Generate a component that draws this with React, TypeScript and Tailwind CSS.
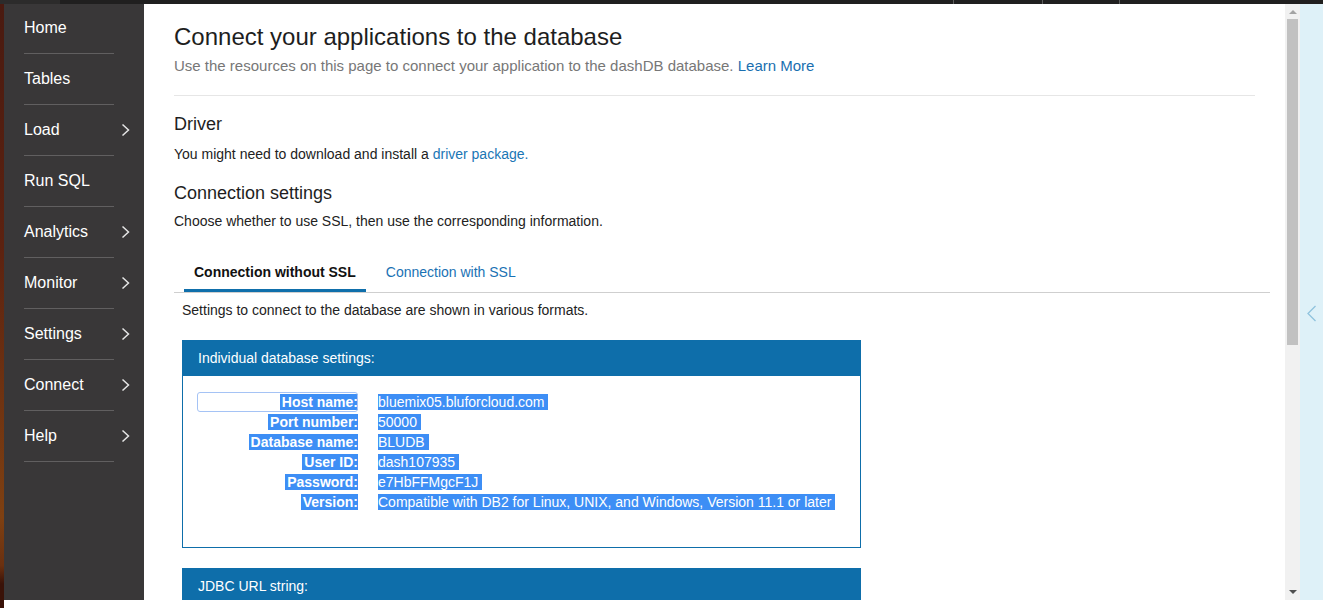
import React from "react";

const navItems: { label: string; chevron: boolean }[] = [
  { label: "Home", chevron: false },
  { label: "Tables", chevron: false },
  { label: "Load", chevron: true },
  { label: "Run SQL", chevron: false },
  { label: "Analytics", chevron: true },
  { label: "Monitor", chevron: true },
  { label: "Settings", chevron: true },
  { label: "Connect", chevron: true },
  { label: "Help", chevron: true },
];

const rows: [string, string][] = [
  ["Host name:", "bluemix05.bluforcloud.com"],
  ["Port number:", "50000"],
  ["Database name:", "BLUDB"],
  ["User ID:", "dash107935"],
  ["Password:", "e7HbFFMgcF1J"],
  ["Version:", "Compatible with DB2 for Linux, UNIX, and Windows, Version 11.1 or later"],
];

function Chevron() {
  return (
    <svg width="9" height="14" viewBox="0 0 9 14" fill="none">
      <path d="M1.5 1.5 L7.5 7 L1.5 12.5" stroke="#e6e6e6" strokeWidth="1.5" />
    </svg>
  );
}

export default function App() {
  return (
    <div className="w-[1323px] h-[608px] flex flex-col overflow-hidden bg-white font-['Liberation_Sans',Arial,sans-serif]">
      {/* top bar */}
      <div className="h-[4px] flex shrink-0 bg-[#201f1f]">
        <div className="w-[60px] bg-[#2c2b2b]" />
        <div className="w-[893px]" />
        <div className="w-px bg-[#5c5c5c]" />
        <div className="w-[88px]" />
        <div className="w-px bg-[#5c5c5c]" />
        <div className="w-[76px]" />
        <div className="w-px bg-[#5c5c5c]" />
        <div className="flex-1" />
      </div>
      <div className="flex flex-1 min-h-0">
        {/* desktop strip */}
        <div className="w-[4px] h-full bg-[linear-gradient(to_bottom,#4a1a10_0%,#5c2210_40%,#7e4012_85%,#6a3010_93%,#3a1208_96%,#3a1208_100%)]" />
        <div className="flex-1 flex flex-col">
          <div className="h-[596px] flex">
            {/* sidebar */}
            <div className="w-[140px] bg-[#393738] flex flex-col">
              <div className="-mt-[1px] flex flex-col">
                {navItems.map((it) => (
                  <div key={it.label} className="flex flex-col">
                    <div className="h-[50px] flex items-center justify-between pl-[20px] pr-[14px]">
                      <span className="text-[16px] text-white leading-[20px]">{it.label}</span>
                      {it.chevron && <Chevron />}
                    </div>
                    <div className="ml-[20px] w-[90px] h-px bg-[#615f60]" />
                  </div>
                ))}
              </div>
            </div>
            {/* main */}
            <div className="flex-1 overflow-hidden px-[30px] text-[#222]">
              <h1 className="pt-[19px] text-[24px] leading-[28px] text-[#1e1e1e]">
                Connect your applications to the database
              </h1>
              <p className="mt-[5px] text-[15px] leading-[20px] text-[#777]">
                Use the resources on this page to connect your application to the dashDB database.{" "}
                <span className="text-[#1a6fb0]">Learn More</span>
              </p>
              <div className="mt-[19px] h-px bg-[#e6e6e6]" />
              <h2 className="mt-[17px] text-[18px] leading-[22px] text-[#1e1e1e]">Driver</h2>
              <p className="mt-[10px] text-[14px] leading-[18px] text-[#222]">
                You might need to download and install a{" "}
                <span className="text-[#1a76b5]">driver package.</span>
              </p>
              <h2 className="mt-[19px] text-[18px] leading-[22px] text-[#1e1e1e]">Connection settings</h2>
              <p className="mt-[8px] text-[14px] leading-[18px] text-[#222]">
                Choose whether to use SSL, then use the corresponding information.
              </p>

              {/* tabs */}
              <div className="mt-[22px] -mr-[15px] flex gap-[10px] pl-[10px] border-b border-[#cfcfcf]">
                <div className="px-[10px] pt-[11px] pb-[8px] border-b-[3px] border-[#0f6fab] text-[14px] leading-[18px] font-bold text-[#111]">
                  Connection without SSL
                </div>
                <div className="px-[10px] pt-[11px] pb-[8px] border-b-[3px] border-transparent text-[14px] leading-[18px] text-[#1a72b4]">
                  Connection with SSL
                </div>
              </div>

              <p className="mt-[8px] ml-[8px] text-[14px] leading-[18px] text-[#222]">
                Settings to connect to the database are shown in various formats.
              </p>

              {/* individual settings box */}
              <div className="mt-[21px] ml-[8px] w-[679px]">
                <div className="h-[36px] bg-[#0e6eaa] flex items-center pl-[16px] text-[14px] text-white">
                  Individual database settings:
                </div>
                <div className="h-[172px] border-x border-b border-[#0e6eaa] pt-[16px] pl-[14px]">
                  <div className="grid grid-cols-[161px_1fr] text-[14px] leading-[20px]">
                    {rows.map(([k, v], i) => (
                      <React.Fragment key={k}>
                        <div
                          className={
                            "text-right " +
                            (i === 0
                              ? "outline outline-[1.5px] outline-[#a5c3f5] -outline-offset-1 rounded-[3px]"
                              : "")
                          }
                        >
                          <span className="bg-[#3d8ef5] text-white font-bold pl-[2px]">{k}</span>
                        </div>
                        <div className="pl-[20px] whitespace-nowrap">
                          <span className="bg-[#3d8ef5] text-white">{v + "\u00a0"}</span>
                        </div>
                      </React.Fragment>
                    ))}
                  </div>
                </div>
              </div>

              {/* JDBC box */}
              <div className="mt-[20px] ml-[8px] w-[679px]">
                <div className="h-[36px] bg-[#0e6eaa] flex items-center pl-[16px] text-[14px] text-white">
                  JDBC URL string:
                </div>
              </div>
            </div>
            {/* scrollbar */}
            <div className="w-[15px] bg-[#f1f1f1] flex flex-col">
              <div className="h-[15px] flex items-center justify-center">
                <svg width="8" height="5" viewBox="0 0 8 5">
                  <path d="M0 5 L4 1 L8 5 Z" fill="#a3a3a3" />
                </svg>
              </div>
              <div className="mx-[2px] h-[326px] bg-[#c1c1c1]" />
              <div className="flex-1" />
              <div className="h-[15px] flex items-center justify-center">
                <svg width="8" height="5" viewBox="0 0 8 5">
                  <path d="M0 0 L8 0 L4 4 Z" fill="#505050" />
                </svg>
              </div>
            </div>
            {/* right panel */}
            <div className="w-[23px] bg-[#def1f8] pt-[301px] pl-[6px]">
              <svg width="11" height="17" viewBox="0 0 11 17" fill="none">
                <path d="M9.5 1 L2 8.5 L9.5 16" stroke="#8fc3de" strokeWidth="1.3" />
              </svg>
            </div>
          </div>
          <div className="flex-1 bg-white" />
        </div>
      </div>
    </div>
  );
}
